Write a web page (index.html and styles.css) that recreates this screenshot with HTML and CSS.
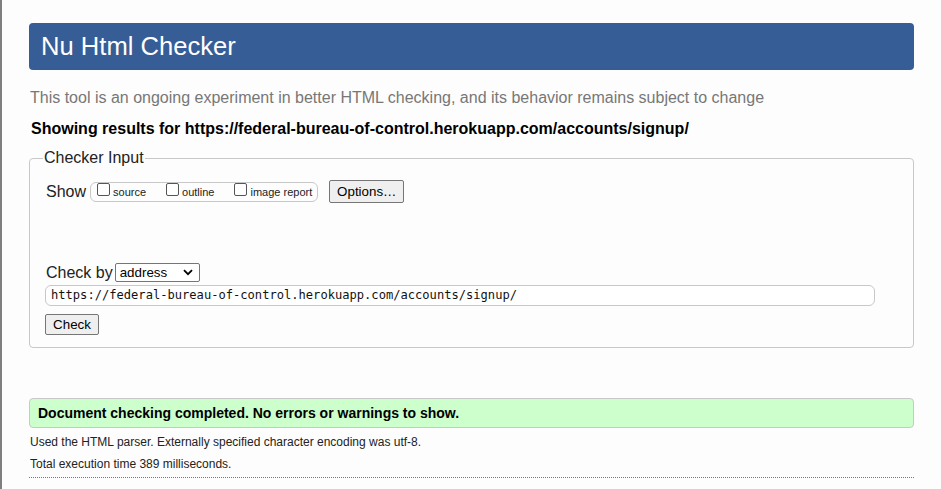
FILE: index.html
```html
<!DOCTYPE html>
<html>
<head>
<meta charset="utf-8">
<title>Nu Html Checker</title>
<link rel="stylesheet" href="styles.css">
</head>
<body>
<div class="page">
  <h1 class="title">Nu Html Checker</h1>
  <p class="lede">This tool is an ongoing experiment in better HTML checking, and its behavior remains subject to change</p>
  <p class="showing">Showing results for https://federal-bureau-of-control.herokuapp.com/accounts/signup/</p>
  <fieldset class="input">
    <legend>Checker Input</legend>
    <div class="show-row">
      <span class="show-label">Show</span>
      <span class="opts">
        <label class="opt"><span class="cb"></span>source</label>
        <label class="opt"><span class="cb"></span>outline</label>
        <label class="opt"><span class="cb"></span>image report</label>
      </span>
      <span class="btn opt-btn">Options…</span>
    </div>
    <div class="checkby-row">
      <span class="checkby-label">Check by</span>
      <span class="select">address<svg class="chev" width="10" height="7" viewBox="0 0 10 7"><path d="M1 1.2 L5 5.2 L9 1.2" fill="none" stroke="#000" stroke-width="1.8"/></svg></span>
    </div>
    <div class="url">https://federal-bureau-of-control.herokuapp.com/accounts/signup/</div>
    <div class="btn check-btn">Check</div>
  </fieldset>
  <div class="success">Document checking completed. No errors or warnings to show.</div>
  <div class="metas">
    <p class="meta">Used the HTML parser. Externally specified character encoding was utf-8.</p>
    <p class="meta">Total execution time 389 milliseconds.</p>
  </div>
  <div class="rule"></div>
</div>
</body>
</html>
```
FILE: styles.css
```css
html, body {
  margin: 0;
  padding: 0;
  height: 100%;
}
body {
  background: #fdfdfd;
  border-left: 2px solid #7f7f7f;
  box-sizing: border-box;
  font-family: "Liberation Sans", Arial, sans-serif;
  color: #000;
}
.page {
  margin: 0 27px 0 27px;
  padding-top: 23px;
}
.title {
  margin: 0;
  background: #365d95;
  color: #fff;
  font-weight: normal;
  font-size: 25.6px;
  line-height: 47px;
  height: 47px;
  padding: 0 12px;
  border-radius: 4px;
}
.lede {
  margin: 18px 0 0 1px;
  color: #777;
  font-size: 16px;
  line-height: 20px;
}
.showing {
  margin: 11px 0 0 2px;
  font-weight: bold;
  font-size: 16px;
  line-height: 20px;
}
.input {
  margin: 10px 0 0 0;
  border: 1px solid #c8c8c8;
  border-radius: 4px;
  padding: 13px 15px 12px 15px;
  box-sizing: border-box;
}
.input legend {
  font-size: 16px;
  padding: 0 1px;
  margin-left: -2px;
  color: #222;
}
.show-row {
  display: flex;
  align-items: center;
  height: 23px;
  padding-left: 1px;
}
.show-label {
  font-size: 16px;
  color: #222;
  margin-right: 4px;
}
.opts {
  display: inline-flex;
  align-items: center;
  border: 1px solid #c8c8c8;
  border-radius: 6px;
  height: 20px;
  box-sizing: border-box;
  padding: 0 5px 0 2px;
}
.opt {
  display: inline-flex;
  align-items: center;
  font-size: 11px;
  color: #222;
  margin-right: 16px;
}
.opt:last-child { margin-right: 0; }
.cb {
  display: inline-block;
  width: 13px;
  height: 13px;
  box-sizing: border-box;
  border: 1px solid #555;
  border-radius: 2px;
  background: #fff;
  margin: 0 3px 0 4px;
  position: relative;
  top: -2px;
}
.btn {
  display: inline-flex;
  align-items: center;
  justify-content: center;
  background: #efefef;
  border: 1px solid #767676;
  border-radius: 2px;
  font-size: 13.33px;
  color: #000;
  box-sizing: border-box;
}
.opt-btn {
  margin-left: 11px;
  width: 75px;
  height: 23px;
}
.checkby-row {
  margin-top: 60px;
  display: flex;
  align-items: center;
  height: 19px;
  padding-left: 1px;
}
.checkby-label {
  font-size: 16px;
  color: #222;
  margin-right: 2px;
}
.select {
  display: inline-flex;
  align-items: center;
  justify-content: space-between;
  width: 85px;
  height: 19px;
  box-sizing: border-box;
  border: 1px solid #767676;
  border-radius: 2px;
  background: #fff;
  font-size: 13.33px;
  padding: 0 6px 0 4px;
}
.url {
  margin-top: 3px;
  width: 830px;
  height: 21px;
  box-sizing: border-box;
  border: 1px solid #c8c8c8;
  border-radius: 6px;
  background: #fff;
  font-family: "DejaVu Sans Mono", "Liberation Mono", monospace;
  font-size: 12.1px;
  line-height: 19px;
  padding: 0 5px;
  color: #111;
}
.check-btn {
  margin-top: 8px;
  width: 54px;
  height: 21px;
}
.success {
  margin-top: 50px;
  background: #ccffcc;
  border: 1px solid #c8c8c8;
  border-radius: 4px;
  height: 30px;
  box-sizing: border-box;
  font-weight: bold;
  font-size: 14px;
  line-height: 28px;
  padding-left: 8px;
}
.metas {
  margin-top: 3px;
}
.meta {
  margin: 0;
  font-size: 12px;
  line-height: 22px;
  color: #222;
  padding-left: 1px;
}
.rule {
  margin-top: 2px;
  border-top: 1px dotted #777;
}
```
